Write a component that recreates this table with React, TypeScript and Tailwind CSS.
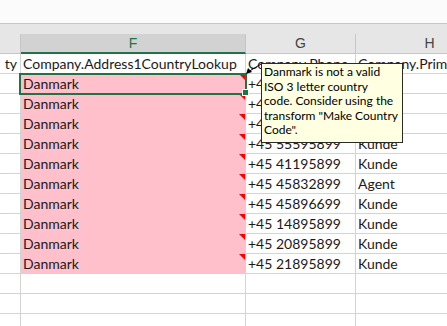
const rows = [
  { phone: '+45 33695899', type: 'Kunde' },
  { phone: '+45 43295899', type: 'Kunde' },
  { phone: '+45 45195899', type: 'Kunde' },
  { phone: '+45 55595899', type: 'Kunde' },
  { phone: '+45 41195899', type: 'Kunde' },
  { phone: '+45 45832899', type: 'Agent' },
  { phone: '+45 45896699', type: 'Kunde' },
  { phone: '+45 14895899', type: 'Kunde' },
  { phone: '+45 20895899', type: 'Kunde' },
  { phone: '+45 21895899', type: 'Kunde' },
];

const cellFont = "font-['Lato','Liberation_Sans',sans-serif] text-[14px] text-[#1a1a1a]";

function Cell({ children, className = '' }: { children?: React.ReactNode; className?: string }) {
  return (
    <div className={`h-5 border-r border-b border-[#d4d4d4] flex items-center px-[2px] whitespace-nowrap overflow-visible ${className}`}>
      {children}
    </div>
  );
}

export default function App() {
  return (
    <div className="relative w-[447px] h-[326px] overflow-hidden bg-white">
      <div className="h-[23px] bg-[#fbfbfb] border-b border-[#c6c6c6] box-content" />
      <div className="h-[10px] bg-[#e6e6e6]" />

      <div className="grid grid-cols-[21px_225px_110px_148px] font-['Liberation_Sans',sans-serif] text-[14px]">
        <div className="h-5 bg-[#e6e6e6] border-r border-b border-[#c6c6c6]" />
        <div className="h-5 bg-[#d2d2d2] border-r border-r-[#c6c6c6] border-b-2 border-b-[#217346] flex items-center justify-center text-[#217346]">F</div>
        <div className="h-5 bg-[#e6e6e6] border-r border-b border-[#c6c6c6] flex items-center justify-center text-[#444]">G</div>
        <div className="h-5 bg-[#e6e6e6] border-r border-b border-[#c6c6c6] flex items-center justify-center text-[#444]">H</div>
      </div>

      <div className={`grid grid-cols-[21px_225px_110px_148px] ${cellFont}`}>
        <Cell className="justify-end pr-[3px] overflow-hidden">ty</Cell>
        <Cell>Company.Address1CountryLookup</Cell>
        <Cell className="overflow-hidden">Company.Phone</Cell>
        <Cell className="overflow-hidden">Company.Primary</Cell>

        {rows.map((r, i) => (
          <div key={i} className="contents">
            <Cell />
            <div
              className={`relative h-5 bg-[#ffc0cb] border-r border-r-[#ffc0cb] border-b flex items-center px-[2px] ${
                i === rows.length - 1 ? 'border-b-[#d4d4d4]' : 'border-b-[#ffc0cb]'
              }`}
            >
              Danmark
              <div className="absolute top-0 right-0 w-0 h-0 border-t-[6px] border-l-[6px] border-t-[#ff0000] border-l-transparent" />
            </div>
            <Cell>{r.phone}</Cell>
            <Cell>{r.type}</Cell>
          </div>
        ))}

        {[0, 1, 2].map((i) => (
          <div key={`e${i}`} className="contents">
            <Cell />
            <Cell />
            <Cell />
            <Cell />
          </div>
        ))}
      </div>

      {/* active cell */}
      <div className="absolute left-[19px] top-[73px] w-[228px] h-[22px] border-2 border-[#217346]" />
      <div className="absolute left-[242px] top-[89px] w-[7px] h-[7px] bg-[#217346] border border-white" />

      {/* comment arrow */}
      <svg className="absolute left-[244px] top-[60px]" width="20" height="18" viewBox="0 0 20 18">
        <line x1="4" y1="12" x2="17" y2="4" stroke="#000" strokeWidth="1" />
        <polygon points="2,14 4,8 8,12" fill="#000" />
      </svg>

      {/* comment box */}
      <div className="absolute left-[261px] top-[63px] w-[142px] h-[80px] bg-[#ffffe1] border border-[#2a2a2a] px-[2px] pt-[1px] font-['Lato','Liberation_Sans',sans-serif] text-[12px] leading-[14.6px] text-black whitespace-nowrap">
        Danmark is not a valid
        <br />
        ISO 3 letter country
        <br />
        code. Consider using the
        <br />
        transform "Make Country
        <br />
        Code".
      </div>
    </div>
  );
}
